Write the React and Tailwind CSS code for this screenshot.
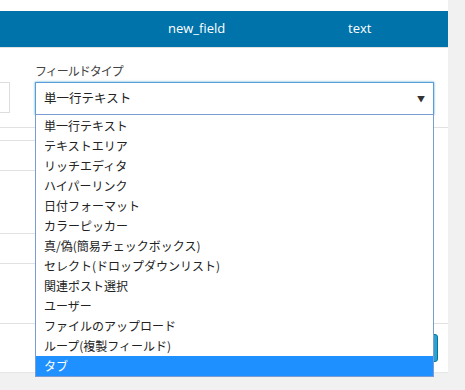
import React from "react";

const items = [
  "単一行テキスト",
  "テキストエリア",
  "リッチエディタ",
  "ハイパーリンク",
  "日付フォーマット",
  "カラーピッカー",
  "真/偽(簡易チェックボックス)",
  "セレクト(ドロップダウンリスト)",
  "関連ポスト選択",
  "ユーザー",
  "ファイルのアップロード",
  "ループ(複製フィールド)",
  "タブ",
];

const jp = { fontFamily: '"Noto Sans CJK JP", "Liberation Sans", sans-serif' };

export default function App() {
  return (
    <div
      className="flex w-[465px] h-[390px] bg-[#f1f1f1] overflow-hidden"
      style={{ fontFamily: '"Open Sans", "Noto Sans CJK JP", sans-serif' }}
    >
      <div className="relative w-[448px] h-[372px] bg-white flex flex-col shadow-[0_1px_1px_rgba(0,0,0,0.04)]">
        <div className="h-[11px] bg-white" />
        <div className="h-[37px] bg-[#0073aa] border-b border-[#e1e1e1] flex items-center text-white text-[13px] pl-[168px]">
          <span className="w-[180px]">new_field</span>
          <span>text</span>
        </div>

        {/* field row */}
        <div className="h-[80px] flex items-start border-b border-[#e1e1e1]">
          <div className="mt-[34px] w-[10px] h-[31px] border border-l-0 border-[#dddddd] bg-white" />
          <div className="ml-[25px] pt-[15px] flex flex-col">
            <div className="h-[16px] leading-[16px] text-[12px] tracking-[-1px] text-[#444]" style={jp}>
              フィールドタイプ
            </div>
            <div className="mt-[3px] w-[399px] h-[33px] border border-[#5b9dd9] shadow-[0_0_2px_rgba(30,140,190,0.8)] flex items-center justify-between pl-[8px] pr-[8px] text-[12.5px] text-[#222]" style={jp}>
              <span>単一行テキスト</span>
              <span className="text-[8px] text-[#333]">▼</span>
            </div>
          </div>
        </div>

        <div className="h-[13px] w-[300px] border-b border-[#e1e1e1]" />
        <div className="h-[30px] w-[300px] border-b border-[#e1e1e1]" />
        <div className="h-[63px] w-[300px] border-b border-[#e1e1e1]" />
        <div className="h-[30px] w-[300px] border-b border-[#e1e1e1]" />
        <div className="h-[60px] border-b border-[#e1e1e1]" />
        <div className="flex-1 flex justify-end items-start pt-[10px] pr-[10px]">
          <div className="w-[80px] h-[28px] rounded-[3px] bg-[#2ea2cc] border border-[#0074a2]" />
        </div>

        {/* open dropdown */}
        <div
          className="absolute left-[35px] top-[114px] w-[399px] border border-[#7a9cd3] bg-white pt-[1px] text-[12px] text-[#222]"
          style={jp}
        >
          {items.map((t, i) => (
            <div
              key={t}
              className={
                "h-[20px] leading-[20px] pl-[8px] whitespace-nowrap " +
                (i === items.length - 1 ? "bg-[#1e90ff] text-white" : "")
              }
            >
              {t}
            </div>
          ))}
        </div>
      </div>
      <div className="flex-1" />
    </div>
  );
}
